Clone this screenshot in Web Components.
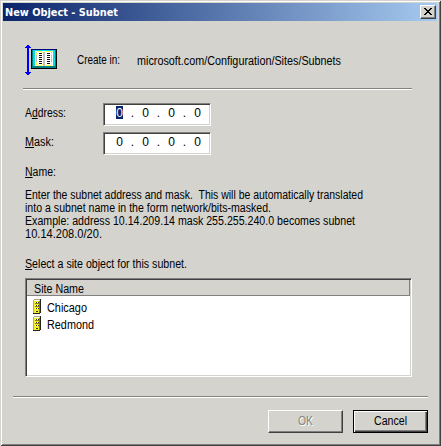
<!DOCTYPE html>
<html lang="en"><head><meta charset="utf-8"><title>New Object - Subnet</title>
<style>html,body{margin:0;height:100%;overflow:hidden;background:#d4d3ce}</style></head>
<body><subnet-dialog></subnet-dialog>
<script>
const define=(name,html,ready)=>customElements.define(name,class extends HTMLElement{
  connectedCallback(){
    if(this.shadowRoot)return;
    const t=document.createElement('template');t.innerHTML=html;
    this.attachShadow({mode:'open'}).append(t.content.cloneNode(true));
    if(ready)ready(this);
  }
});
/* A single line of label text, condensed to a given width in pixels. */
define('ui-text','<style>:host{display:block;width:max-content;white-space:pre}span{display:inline-block;transform-origin:0 0}::slotted(u){text-underline-offset:1px;text-decoration-thickness:1px;text-decoration-skip-ink:none}</style><span><slot></slot></span>',el=>{
  const w=+el.getAttribute('measure');
  if(w){const s=el.shadowRoot.querySelector('span');
    s.style.transform=`scaleX(${w/s.getBoundingClientRect().width})`;el.style.width=w+'px';}
});
define('etched-rule','<style>:host{display:block;height:1px;background:#84837f;border-bottom:1px solid #fff}</style>');
define('subnet-icon',`<style>:host{display:block;width:33px;height:32px}svg{display:block}</style>
<svg width="33" height="32" shape-rendering="crispEdges">
<path fill="#00f" d="M2 1h2v1h1v1h1v1H4v24h2v1H5v1H4v1H2v-1H1v-1H0v-1h2V4H0V3h1V2h1z"/>
<g transform="translate(-1)"><path fill="#000" d="M7 5h26v20H7z"/><path fill="#000080" d="M7 5h25v1H7zM7 6h1v18H7z"/><path fill="#008080" d="M8 6h24v18H8z"/><path fill="#00dede" d="M9 6h22v16H9z"/>
<path fill="#fff" d="M11 7h18v15H11z"/><path fill="#c0c0c0" d="M12 8h1v13h-1zM27 8h1v13h-1zM19 8h2v14h-2z"/>
<path fill="#ffff3c" d="M13 7h5v1h-5zM22 7h5v1h-5zM13 21h5v1h-5zM22 21h5v1h-5zM12 9h1v2h-1zM12 18h1v3h-1zM27 9h1v2h-1zM27 18h1v3h-1zM18 8h1v1h-1zM21 8h1v1h-1zM18 20h1v1h-1zM21 20h1v1h-1z"/>
<path fill="#111" d="M15 9h3v1h-3zM15 11h3v1h-3zM15 13h3v1h-3zM15 15h3v1h-3zM15 17h3v1h-3zM15 19h3v1h-3zM23 9h3v1h-3zM23 11h3v1h-3zM23 13h3v1h-3zM23 15h3v1h-3zM23 17h3v1h-3zM23 19h3v1h-3z"/></g>
</svg>`);
define('site-icon',`<style>:host{display:block;width:8px;height:15px}svg{display:block}</style>
<svg width="8" height="15" shape-rendering="crispEdges"><path fill="#aaa996" d="M1 0h6v1H1zM0 1h1v13H0z"/><path fill="#222" d="M7 0h1v14H7zM0 14h7v1H0z"/><path fill="#f4ec28" d="M1 1h6v13H1z"/><path fill="#fffff0" d="M1 1h5v1H1zM2 3h1v1H2zM4 3h1v1H4zM2 6h1v1H2zM4 6h1v1H4zM2 9h1v1H2zM4 9h1v1H4zM2 12h1v1H2z"/><path fill="#333" d="M3 3h1v1H3zM5 3h1v1H5zM3 6h1v1H3zM5 6h1v1H5zM3 9h1v1H3zM5 9h1v1H5zM3 12h2v1H3z"/><path fill="#87811c" d="M2 4h2v1H2zM4 4h2v1H4zM2 7h4v1H2zM6 2h1v12H6z"/></svg>`);
define('title-bar',`<style>:host{display:flex;align-items:center;justify-content:space-between;height:18px;padding:0 1px 0 2px;background:linear-gradient(90deg,#0a246a,#a6caf0);color:#fff;font:bold 11px/19px "DejaVu Sans Condensed","DejaVu Sans",sans-serif}
button{display:flex;width:16px;height:14px;box-sizing:border-box;padding:2px 0 0 3px;border:1px solid;border-color:#fff #404040 #404040 #fff;box-shadow:inset -1px -1px #808080;background:#d4d3ce}svg{display:block}</style>
<slot></slot><button aria-label="Close"><svg width="8" height="7" shape-rendering="crispEdges"><path d="M0 0h2v1h1v1h2V1h1V0h2v1H7v1H6v1H5v1h1v1h1v1h1v1H6V6H5V5H3v1H2v1H0V6h1V5h1V4h1V3H2V2H1V1H0z"/></svg></button>`);
define('ip-field',`<style>:host{display:flex;box-sizing:border-box;width:108px;height:23px;padding:2px 0 0 12px;background:#fff;border:1px solid;border-color:#808080 #fff #fff #808080;box-shadow:inset 1px 1px #404040,inset -1px -1px #d4d3ce;line-height:14px}
span{width:7px;text-align:center;height:13px}i{font-style:normal;width:19px;text-align:center}:host([selected]) .first{background:#0a246a;color:#fff}</style>
<span class="first">0</span><i>.</i><span>0</span><i>.</i><span>0</span><i>.</i><span>0</span>`);
define('push-button',`<style>:host{display:block;box-sizing:border-box;width:75px;height:23px;border:1px solid;border-color:#fff #404040 #404040 #fff;box-shadow:inset -1px -1px #808080;line-height:21px}
div{display:flex;justify-content:center}:host([disabled]){color:#84837f;text-shadow:1px 1px #fff}
:host([default]){border-color:#000;box-shadow:inset 1px 1px #fff,inset -1px -1px #404040,inset -2px -2px #808080}</style><div><slot></slot></div>`);
define('site-row','<style>:host{display:flex;gap:6px;height:17px;padding-left:6px;line-height:17px}site-icon{margin-top:-1px}</style><site-icon></site-icon><slot></slot>');
define('site-list',`<style>:host{display:block;box-sizing:border-box;height:99px;background:#fff;border:1px solid;border-color:#808080 #fff #fff #808080;box-shadow:inset 1px 1px #404040,inset -1px -1px #d4d3ce;padding:1px}
header{height:16px;box-sizing:border-box;padding-left:7px;line-height:19px;background:#d4d3ce;border:solid #808080;border-width:0 1px 1px 0;margin-bottom:4px}</style>
<header><slot name="header"></slot></header><slot></slot>`);
define('subnet-dialog',`<style>
:host{display:flex;flex-direction:column;box-sizing:border-box;width:441px;height:446px;background:#d4d3ce;color:#000;font:12px/13px "Liberation Sans",Arial,sans-serif;padding:3px 4px 3px 3px;box-shadow:inset 1px 1px #d4d3ce,inset -1px -1px #404040,inset 2px 2px #fff,inset -2px -2px #808080}
.top{display:flex;height:67px;padding:23px 0 0 22px;box-sizing:border-box}
.top ui-text:nth-of-type(1){margin:10px 0 0 19px}.top ui-text:nth-of-type(2){margin:11px 0 0 17px}
.r1{margin:0 25px 0 20px}
.fields{display:grid;grid-template-columns:78px 108px;row-gap:6px;margin:13px 0 0 22px}.fields ui-text{margin-top:4px}
.body{padding:11px 25px 0 22px}.copy{margin-top:10px}.pick{margin:17px 0 7px}
.r2{margin:19px 9px 0 10px}
footer{display:flex;justify-content:flex-end;gap:10px;padding:12px 9px 0 0}
</style>
<title-bar><ui-text measure="113">New Object - Subnet</ui-text></title-bar>
<section class="top"><subnet-icon></subnet-icon><ui-text measure="43">Create in:</ui-text><ui-text measure="204">microsoft.com/Configuration/Sites/Subnets</ui-text></section>
<etched-rule class="r1"></etched-rule>
<section class="fields"><ui-text measure="41">A<u>d</u>dress:</ui-text><ip-field selected></ip-field><ui-text measure="29"><u>M</u>ask:</ui-text><ip-field></ip-field></section>
<section class="body"><ui-text measure="31"><u>N</u>ame:</ui-text>
<div class="copy"><ui-text measure="338">Enter the subnet address and mask.  This will be automatically translated</ui-text><ui-text measure="246">into a subnet name in the form network/bits-masked.</ui-text><ui-text measure="330">Example: address 10.14.209.14 mask 255.255.240.0 becomes subnet</ui-text><ui-text measure="77">10.14.208.0/20.</ui-text></div>
<ui-text class="pick" measure="162"><u>S</u>elect a site object for this subnet.</ui-text>
<site-list><ui-text slot="header" measure="50">Site Name</ui-text><site-row><ui-text measure="40">Chicago</ui-text></site-row><site-row><ui-text measure="47">Redmond</ui-text></site-row></site-list></section>
<etched-rule class="r2"></etched-rule>
<footer><push-button disabled><ui-text measure="15">OK</ui-text></push-button><push-button default><ui-text measure="33">Cancel</ui-text></push-button></footer>`);
</script></body></html>
